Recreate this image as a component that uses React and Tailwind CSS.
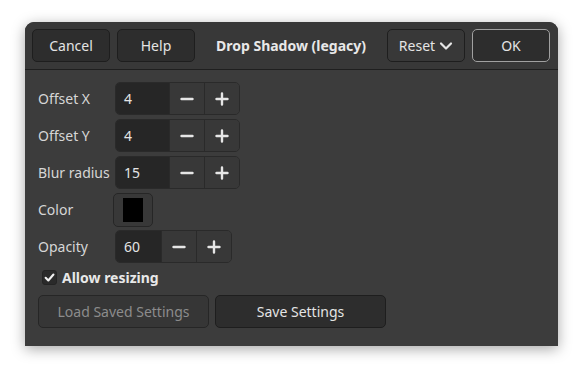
import React from "react";

// ── Small glyphs ────────────────────────────────────────────────
const Minus = () => (
  <svg width="14" height="14" viewBox="0 0 14 14">
    <path d="M1.5 7h11" stroke="#e6e6e6" strokeWidth="2.4" strokeLinecap="round" />
  </svg>
);

const Plus = () => (
  <svg width="14" height="14" viewBox="0 0 14 14">
    <path d="M1.5 7h11M7 1.5v11" stroke="#e6e6e6" strokeWidth="2.4" strokeLinecap="round" />
  </svg>
);

const Chevron = () => (
  <svg width="14" height="14" viewBox="0 0 14 14">
    <path d="M2 4.5l5 5 5-5" fill="none" stroke="#e6e6e6" strokeWidth="2.2" strokeLinecap="round" strokeLinejoin="round" />
  </svg>
);

const Check = () => (
  <svg width="11" height="11" viewBox="0 0 12 12">
    <path d="M1.8 6.3l2.9 2.9 5.6-6.4" fill="none" stroke="#f0f0f0" strokeWidth="2.3" strokeLinecap="round" strokeLinejoin="round" />
  </svg>
);

// ── Header button ───────────────────────────────────────────────
const HeadButton = ({ children, className = "" }) => (
  <button
    className={
      "h-[33px] w-[78px] rounded-[5px] border border-[#1e1e1e] bg-[#2d2d2d] text-[#e4e4e4] flex items-center justify-center " +
      className
    }
  >
    {children}
  </button>
);

// ── Spin button row ─────────────────────────────────────────────
const SpinRow = ({ label, value, entryW = "w-[53px]" }) => (
  <div className="flex items-center h-[33px]">
    <div className="w-[77px] text-[#d6d6d6]">{label}</div>
    <div className="flex h-[33px] rounded-[5px] border border-[#2a2a2a] overflow-hidden">
      <div className={entryW + " bg-[#262626] flex items-center pl-[8px] text-[#e4e4e4]"}>{value}</div>
      <div className="w-[35px] bg-[#383838] border-l border-[#2a2a2a] flex items-center justify-center">
        <Minus />
      </div>
      <div className="w-[35px] bg-[#383838] border-l border-[#2a2a2a] flex items-center justify-center">
        <Plus />
      </div>
    </div>
  </div>
);

const App = () => {
  return (
    <div
      className="w-[583px] h-[374px] bg-white pt-[22px] pl-[25px]"
      style={{ fontFamily: '"Noto Sans", sans-serif' }}
    >
      <div className="w-[533px] h-[324px] rounded-t-[9px] bg-[#3c3c3c] shadow-[0_3px_14px_rgba(0,0,0,0.35)] text-[14px] flex flex-col">
        {/* ── Header bar ─────────────────────────────────── */}
        <div className="h-[48px] rounded-t-[9px] bg-[#383838] border-b border-[#1f1f1f] flex items-center px-[7px]">
          <div className="flex gap-[7px]">
            <HeadButton>Cancel</HeadButton>
            <HeadButton>Help</HeadButton>
          </div>
          <div className="flex-1 text-center font-bold text-[#e8e8e8]">Drop Shadow (legacy)</div>
          <div className="flex gap-[7px] pr-[1px]">
            <HeadButton className="bg-[#383838] gap-[4px]">
              Reset <Chevron />
            </HeadButton>
            <HeadButton className="border-[#a0a0a0] bg-[#2b2b2b]">OK</HeadButton>
          </div>
        </div>

        {/* ── Settings ───────────────────────────────────── */}
        <div className="flex flex-col pl-[13px] pt-[12px]">
          <div className="flex flex-col gap-[4px]">
            <SpinRow label="Offset X" value="4" />
            <SpinRow label="Offset Y" value="4" />
            <SpinRow label="Blur radius" value="15" />
            <div className="flex items-center h-[33px]">
              <div className="w-[75px] text-[#d6d6d6]">Color</div>
              <div className="w-[40px] h-[34px] rounded-[5px] border border-[#262626] bg-[#383838] flex items-center justify-center">
                <div className="w-[20px] h-[24px] bg-black" />
              </div>
            </div>
            <SpinRow label="Opacity" value="60" entryW="w-[45px]" />
          </div>

          <div className="flex items-center mt-[7px] ml-[4px] h-[15px]">
            <div className="w-[15px] h-[15px] rounded-[3px] bg-[#2a2a2a] border border-[#242424] flex items-center justify-center">
              <Check />
            </div>
            <span className="ml-[5px] font-bold text-[#e8e8e8]">Allow resizing</span>
          </div>

          <div className="flex gap-[6px] mt-[10px]">
            <button className="w-[171px] h-[33px] rounded-[5px] border border-[#262626] bg-[#363636] text-[#8c8c8c]">
              Load Saved Settings
            </button>
            <button className="w-[171px] h-[33px] rounded-[5px] border border-[#1e1e1e] bg-[#2d2d2d] text-[#e4e4e4]">
              Save Settings
            </button>
          </div>
        </div>
      </div>
    </div>
  );
};

export default App;
